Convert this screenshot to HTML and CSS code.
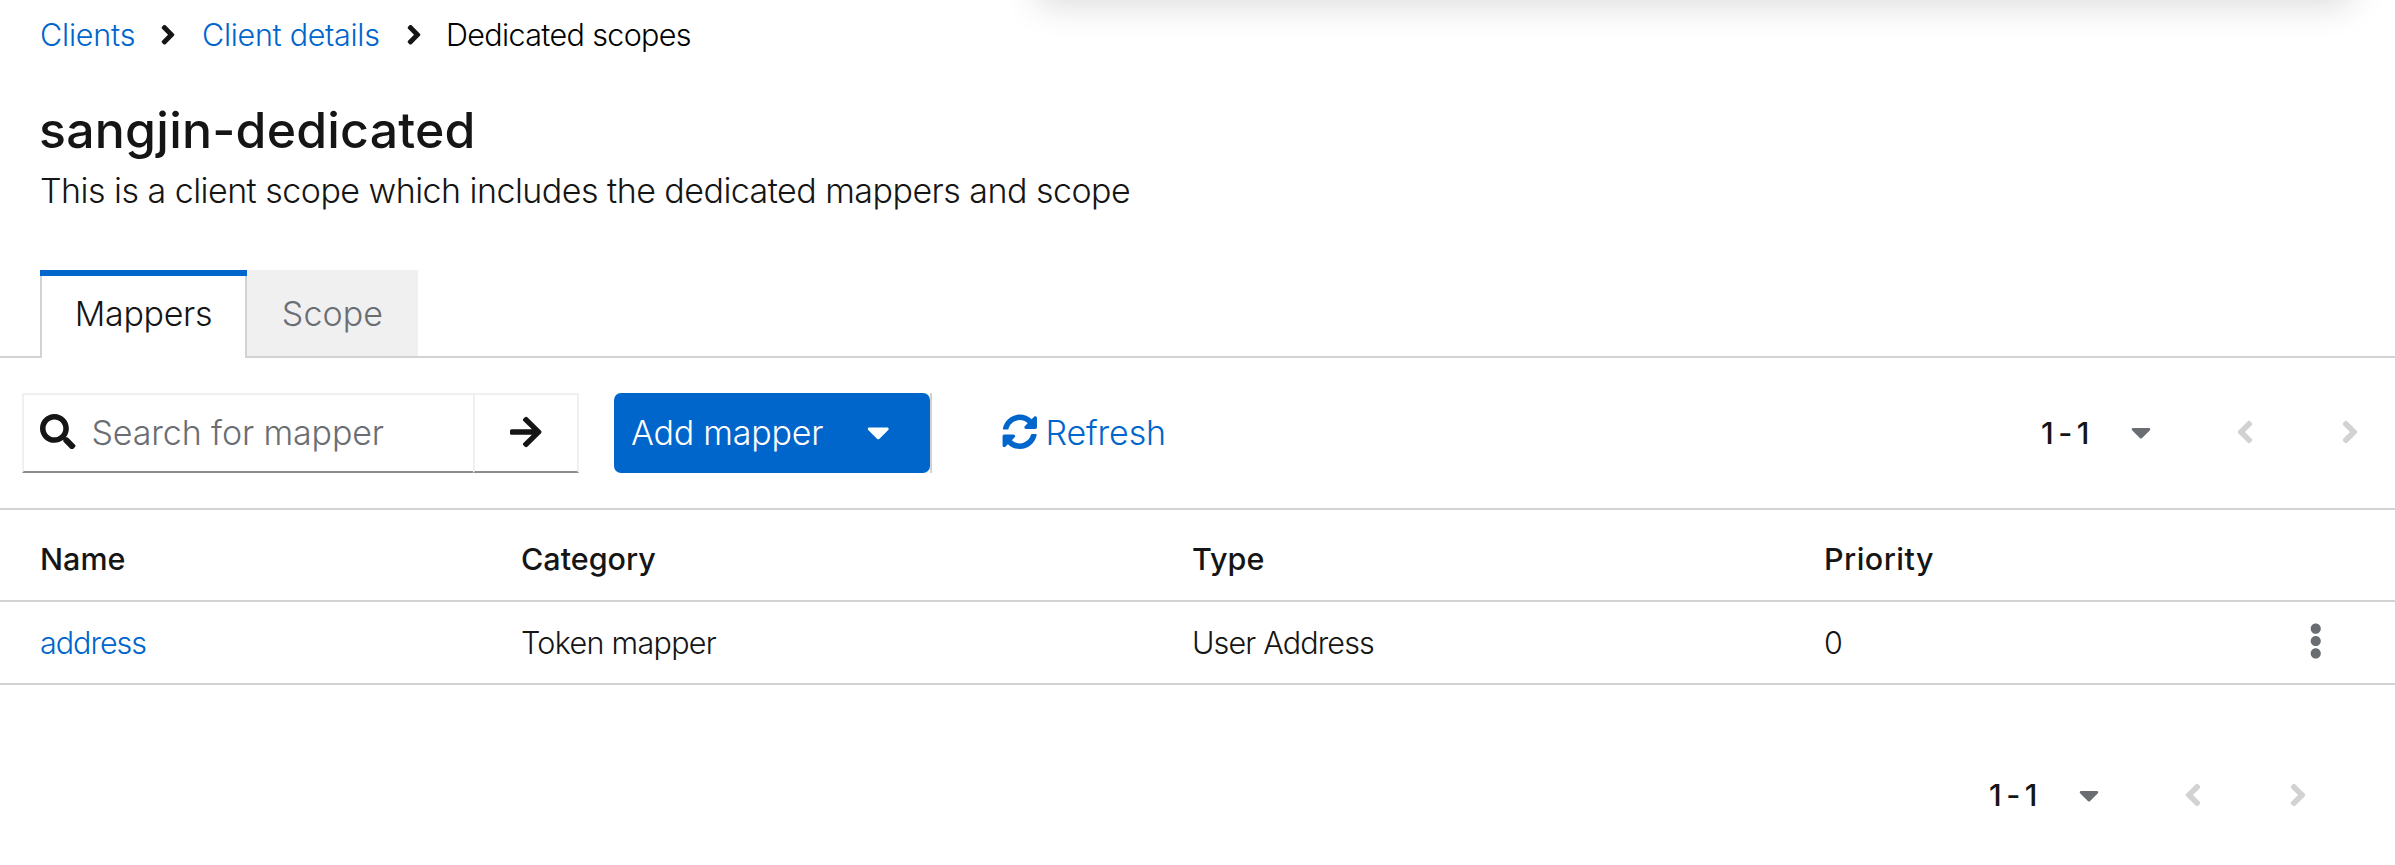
FILE: index.html
```
<!DOCTYPE html>
<html lang="en">
<head>
<meta charset="utf-8">
<title>sangjin-dedicated</title>
<link rel="stylesheet" href="styles.css">
</head>
<body>
<svg class="defs" aria-hidden="true">
  <symbol id="angle" viewBox="0 0 256 512"><path d="M224.3 273l-136 136c-9.4 9.4-24.6 9.4-33.9 0l-22.6-22.6c-9.4-9.4-9.4-24.6 0-33.9l96.4-96.4-96.4-96.4c-9.4-9.4-9.4-24.6 0-33.9L54.3 103c9.4-9.4 24.6-9.4 33.9 0l136 136c9.5 9.4 9.5 24.6.1 34z"/></symbol>
  <symbol id="caret" viewBox="0 0 320 512"><path d="M31.3 192h257.3c17.8 0 26.7 21.5 14.1 34.1L174.1 354.8c-7.8 7.8-20.5 7.8-28.3 0L17.2 226.1C4.6 213.5 13.5 192 31.3 192z"/></symbol>
</svg>
<div class="popover-shadow"></div>
<nav class="breadcrumb">
  <a class="bc-clients" href="#">Clients</a>
  <svg><use href="#angle"/></svg>
  <a class="bc-details" href="#">Client details</a>
  <svg><use href="#angle"/></svg>
  <span class="bc-current">Dedicated scopes</span>
</nav>
<header class="page-head">
  <h1>sangjin-dedicated</h1>
  <p>This is a client scope which includes the dedicated mappers and scope</p>
</header>
<div class="tabs">
  <div class="tab active"><span>Mappers</span></div>
  <div class="tab"><span>Scope</span></div>
  <div class="tabs-rest"></div>
</div>
<div class="toolbar">
  <div class="search">
    <div class="search-field">
      <svg viewBox="0 0 512 512"><path d="M505 442.7L405.3 343c-4.5-4.5-10.6-7-17-7H372c27.6-35.3 44-79.7 44-128C416 93.1 322.9 0 208 0S0 93.1 0 208s93.1 208 208 208c48.3 0 92.7-16.4 128-44v16.3c0 6.4 2.5 12.5 7 17l99.7 99.7c9.4 9.4 24.6 9.4 33.9 0l28.3-28.3c9.4-9.4 9.4-24.6.1-34zM208 336c-70.7 0-128-57.2-128-128 0-70.7 57.2-128 128-128 70.7 0 128 57.2 128 128 0 70.7-57.2 128-128 128z"/></svg>
      <span>Search for mapper</span>
    </div>
    <div class="search-go">
      <svg viewBox="0 0 448 512"><path d="M190.5 66.9l22.2-22.2c9.4-9.4 24.6-9.4 33.9 0L441 239c9.4 9.4 9.4 24.6 0 33.9L246.6 467.3c-9.4 9.4-24.6 9.4-33.9 0l-22.2-22.2c-9.5-9.5-9.3-25 .4-34.3L311.4 296H24c-13.3 0-24-10.7-24-24v-32c0-13.3 10.7-24 24-24h287.4L190.9 101.2c-9.8-9.3-10-24.8-.4-34.3z"/></svg>
    </div>
  </div>
  <div class="add-wrap"><div class="add"><span>Add mapper</span><svg><use href="#caret"/></svg></div></div>
  <div class="refresh">
    <svg viewBox="0 0 512 512"><path d="M370.72 133.28C339.458 104.008 298.888 87.962 255.848 88c-77.458.068-144.328 53.178-162.791 126.85-1.344 5.363-6.122 9.15-11.651 9.15H24.103c-7.498 0-13.194-6.807-11.807-14.176C33.933 94.924 134.813 8 256 8c66.448 0 126.791 26.136 171.315 68.685L463.03 40.97C478.149 25.851 504 36.559 504 57.941V192c0 13.255-10.745 24-24 24H345.941c-21.382 0-32.09-25.851-16.971-40.971l41.75-41.749zM32 296h134.059c21.382 0 32.09 25.851 16.971 40.971l-41.75 41.75c31.262 29.273 71.835 45.319 114.876 45.28 77.418-.07 144.315-53.144 162.787-126.849 1.344-5.363 6.122-9.15 11.651-9.15h57.304c7.498 0 13.194 6.807 11.807 14.176C478.067 417.076 377.187 504 256 504c-66.448 0-126.791-26.136-171.315-68.685L48.97 471.03C33.851 486.149 8 475.441 8 454.059V320c0-13.255 10.745-24 24-24z"/></svg>
    <span>Refresh</span>
  </div>
  <div class="pager">
    <span>1 - 1</span>
    <svg class="p-caret"><use href="#caret"/></svg>
    <svg class="p-angle prev"><use href="#angle"/></svg>
    <svg class="p-angle"><use href="#angle"/></svg>
  </div>
</div>
<div class="table">
  <div class="row head">
    <span>Name</span><span>Category</span><span>Type</span><span class="h-prio">Priority</span>
  </div>
  <div class="row">
    <a class="c-name" href="#">address</a><span class="c-cat">Token mapper</span><span class="c-type">User Address</span><span class="c-prio">0</span>
    <svg viewBox="0 0 192 512"><path d="M96 184c39.8 0 72 32.2 72 72s-32.2 72-72 72-72-32.2-72-72 32.2-72 72-72zM24 80c0 39.8 32.2 72 72 72s72-32.2 72-72S135.8 8 96 8 24 40.2 24 80zm0 352c0 39.8 32.2 72 72 72s72-32.2 72-72-32.2-72-72-72-72 32.2-72 72z"/></svg>
  </div>
</div>
<footer class="bottom">
  <div class="pager">
    <span>1 - 1</span>
    <svg class="p-caret"><use href="#caret"/></svg>
    <svg class="p-angle prev"><use href="#angle"/></svg>
    <svg class="p-angle"><use href="#angle"/></svg>
  </div>
</footer>
</body>
</html>
```
FILE: styles.css
```
* { box-sizing: border-box; }
body {
  margin: 0;
  height: 865px;
  overflow: hidden;
  background: #fff;
  color: #151515;
  font-family: Inter, Lato, sans-serif;
  font-size: 34px;
  font-weight: 320;
  white-space: nowrap;
}
a { color: #06c; text-decoration: none; }
svg { display: block; flex: none; fill: currentColor; }
.defs { position: absolute; width: 0; height: 0; }

/* Lower edge of the panel that hangs above the page */
.popover-shadow {
  position: absolute;
  top: -115px;
  left: 1038px;
  width: 1313px;
  height: 100px;
  box-shadow: 0 18px 36px rgba(3, 3, 3, .16), 0 0 13px rgba(3, 3, 3, .08);
}

.breadcrumb {
  display: grid;
  grid-template-columns: 120px 42px 204px 40px auto;
  align-items: center;
  height: 69px;
  padding-left: 40px;
  font-size: 30.5px;
}
.breadcrumb svg { width: 16px; height: 31.5px; }
.bc-clients { letter-spacing: -.2px; }
.bc-details { letter-spacing: -.3px; }
.bc-current { letter-spacing: -.65px; color: #000; }

.page-head { padding: 26px 0 0 39px; height: 201px; }
h1 {
  margin: 0;
  font-size: 50px;
  font-weight: 500;
  line-height: 70px;
  letter-spacing: .2px;
}
.page-head p { margin: 0 0 0 1px; line-height: 51px; letter-spacing: -.53px; }

.tabs { display: flex; height: 88px; }
.tabs::before { content: ""; width: 40px; border-bottom: 2px solid #d2d2d2; }
.tab {
  display: flex;
  align-items: center;
  justify-content: center;
  width: 171px;
  background: #f0f0f0;
  border-bottom: 2px solid #d2d2d2;
  color: #6a6e73;
  letter-spacing: .1px;
}
.tab.active {
  width: 207px;
  padding-bottom: 2px;
  background: #fff;
  border: solid #d2d2d2;
  border-width: 0 2px;
  position: relative;
  color: #151515;
  letter-spacing: -.3px;
}
.tab.active::before {
  content: "";
  position: absolute;
  inset: 0 -2px auto;
  height: 6px;
  background: #06c;
}
.tabs-rest { flex: 1; border-bottom: 2px solid #d2d2d2; }

.toolbar { display: flex; align-items: center; height: 150px; padding-left: 22px; }
.search { display: flex; width: 557px; height: 80px; }
.search-field {
  display: flex;
  align-items: center;
  width: 451px;
  padding: 0 0 3px 16px;
  border: 2px solid #f0f0f0;
  border-bottom-color: #8a8d90;
  border-right: 0;
  color: #6a6e73;
  letter-spacing: -.12px;
}
.search-field svg { width: 35.5px; height: 35.5px; margin-right: 16px; color: #151515; }
.search-field span { padding-top: 2px; }
.search-go {
  display: flex;
  align-items: center;
  justify-content: center;
  flex: 1;
  padding: 0 0 3px;
  border: 2px solid #f0f0f0;
  border-bottom-color: #8a8d90;
}
.search-go svg { width: 31.5px; height: 36px; }
.add-wrap { margin-left: 35px; border-right: 2px solid #d2d2d2; }
.add {
  display: flex;
  align-items: center;
  justify-content: space-between;
  width: 316px;
  height: 80px;
  padding: 0 41px 2px 17px;
  border-radius: 7px;
  background: #06c;
  color: #fff;
  letter-spacing: -.22px;
}
.add svg { width: 22.5px; height: 36px; }
.refresh {
  display: flex;
  align-items: center;
  margin-left: 70px;
  padding-bottom: 2px;
  color: #06c;
  letter-spacing: -.15px;
}
.refresh svg { width: 35.5px; height: 35.5px; margin-right: 8px; }

.pager {
  display: flex;
  align-items: center;
  width: 354px;
  margin-left: auto;
  padding-bottom: 2px;
  font-size: 30.5px;
  font-weight: 550;
}
.pager span { width: 90px; letter-spacing: -.3px; word-spacing: -3px; }
.p-caret { width: 20px; height: 32px; color: #6a6e73; }
.p-angle { width: 18px; height: 36px; margin-left: 87px; color: #d2d2d2; }
.p-angle.prev { margin-left: 85px; transform: scaleX(-1); }

.row {
  display: grid;
  grid-template-columns: 481px 671px 632px 485px auto;
  align-items: center;
  height: 83px;
  padding-left: 40px;
  border-bottom: 2px solid #d2d2d2;
  font-size: 30.5px;
}
.row.head {
  height: 94px;
  padding: 6px 0 0 40px;
  border-top: 2px solid #d2d2d2;
  font-weight: 550;
}
.h-prio { letter-spacing: .45px; }
.row svg { width: 13.5px; height: 36px; color: #6a6e73; margin-bottom: 4px; }
.c-name { letter-spacing: -1px; }
.c-cat { letter-spacing: -.7px; }
.c-type { letter-spacing: -.85px; }

.bottom { display: flex; padding: 91px 52px 0 0; }
```
